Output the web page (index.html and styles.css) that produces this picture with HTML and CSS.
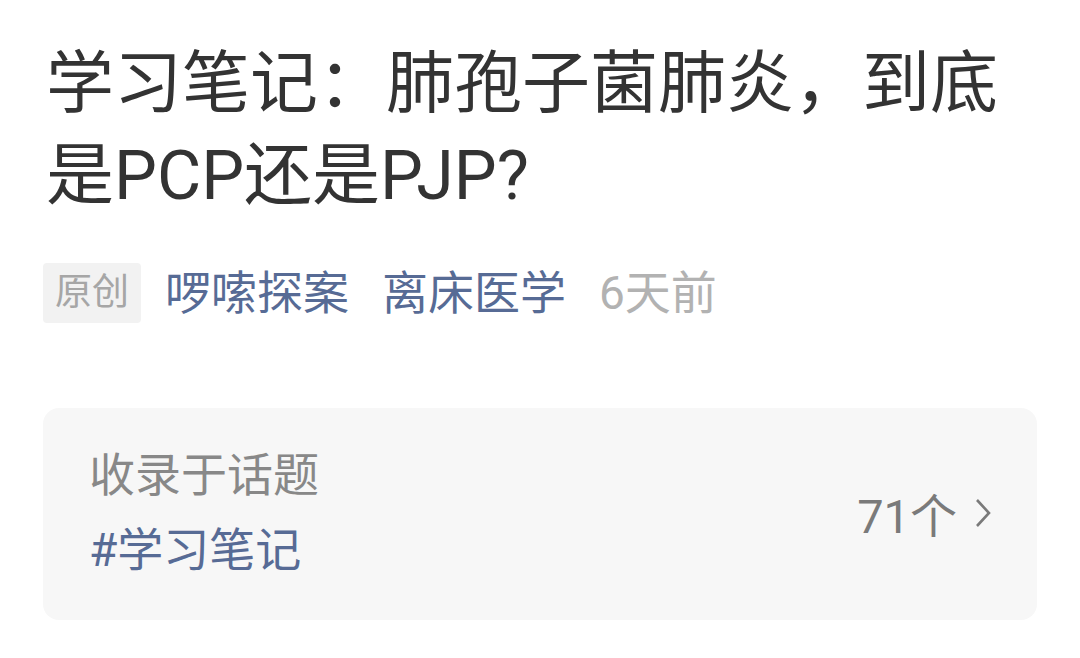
FILE: index.html
```html
<!DOCTYPE html>
<html lang="zh-CN">
<head>
    <meta charset="UTF-8">
    <meta name="viewport" content="width=device-width, initial-scale=1.0">
    <title>学习笔记</title>
    <link rel="stylesheet" href="styles.css">
</head>
<body>
    <div class="article">
        <h1 class="title">学习笔记：肺孢子菌肺炎，到底是PCP还是PJP?</h1>
        <div class="meta">
            <span class="badge">原创</span>
            <a class="meta-link">啰嗦探案</a>
            <a class="meta-link">离床医学</a>
            <span class="meta-time">6天前</span>
        </div>
        <div class="topic-card">
            <div class="topic-info">
                <div class="topic-label">收录于话题</div>
                <div class="topic-name">#学习笔记</div>
            </div>
            <div class="topic-count">
                <span>71个</span>
                <svg class="chevron" width="16" height="30" viewBox="0 0 16 30">
                    <path d="M2 2 L14 15 L2 28" fill="none" stroke="#7a7a7a" stroke-width="2.6"/>
                </svg>
            </div>
        </div>
    </div>
</body>
</html>
```

FILE: styles.css
```css
body {
    margin: 0;
    background: #fff;
    font-family: Roboto, "Noto Sans CJK SC", sans-serif;
    color: #333;
}
.article {
    padding: 38px 43px 0 43px;
}
.title {
    margin: 0 0 0 3px;
    font-size: 68px;
    font-weight: 400;
    line-height: 92px;
    color: #333;
    width: 980px;
}
.meta {
    display: flex;
    align-items: center;
    margin-top: 41px;
    font-size: 46px;
    line-height: 60px;
}
.badge {
    background: #f2f2f2;
    color: #a6a6a6;
    font-size: 37px;
    border-radius: 4px;
    padding: 0 12px;
    height: 60px;
    margin-right: 24px;
}
.meta-link {
    color: #576b95;
    margin-right: 33px;
}
.meta-time {
    color: #b2b2b2;
}
.topic-card {
    margin-top: 85px;
    background: #f7f7f7;
    border-radius: 16px;
    display: flex;
    align-items: center;
    justify-content: space-between;
    padding: 39px 46px 42px 46px;
}
.topic-label {
    font-size: 46px;
    line-height: 56px;
    color: #888;
}
.topic-name {
    font-size: 46px;
    line-height: 56px;
    color: #576b95;
    margin-top: 19px;
}
.topic-count {
    display: flex;
    align-items: center;
    gap: 18px;
    font-size: 47px;
    color: #7a7a7a;
}
.chevron {
    display: block;
}
```
